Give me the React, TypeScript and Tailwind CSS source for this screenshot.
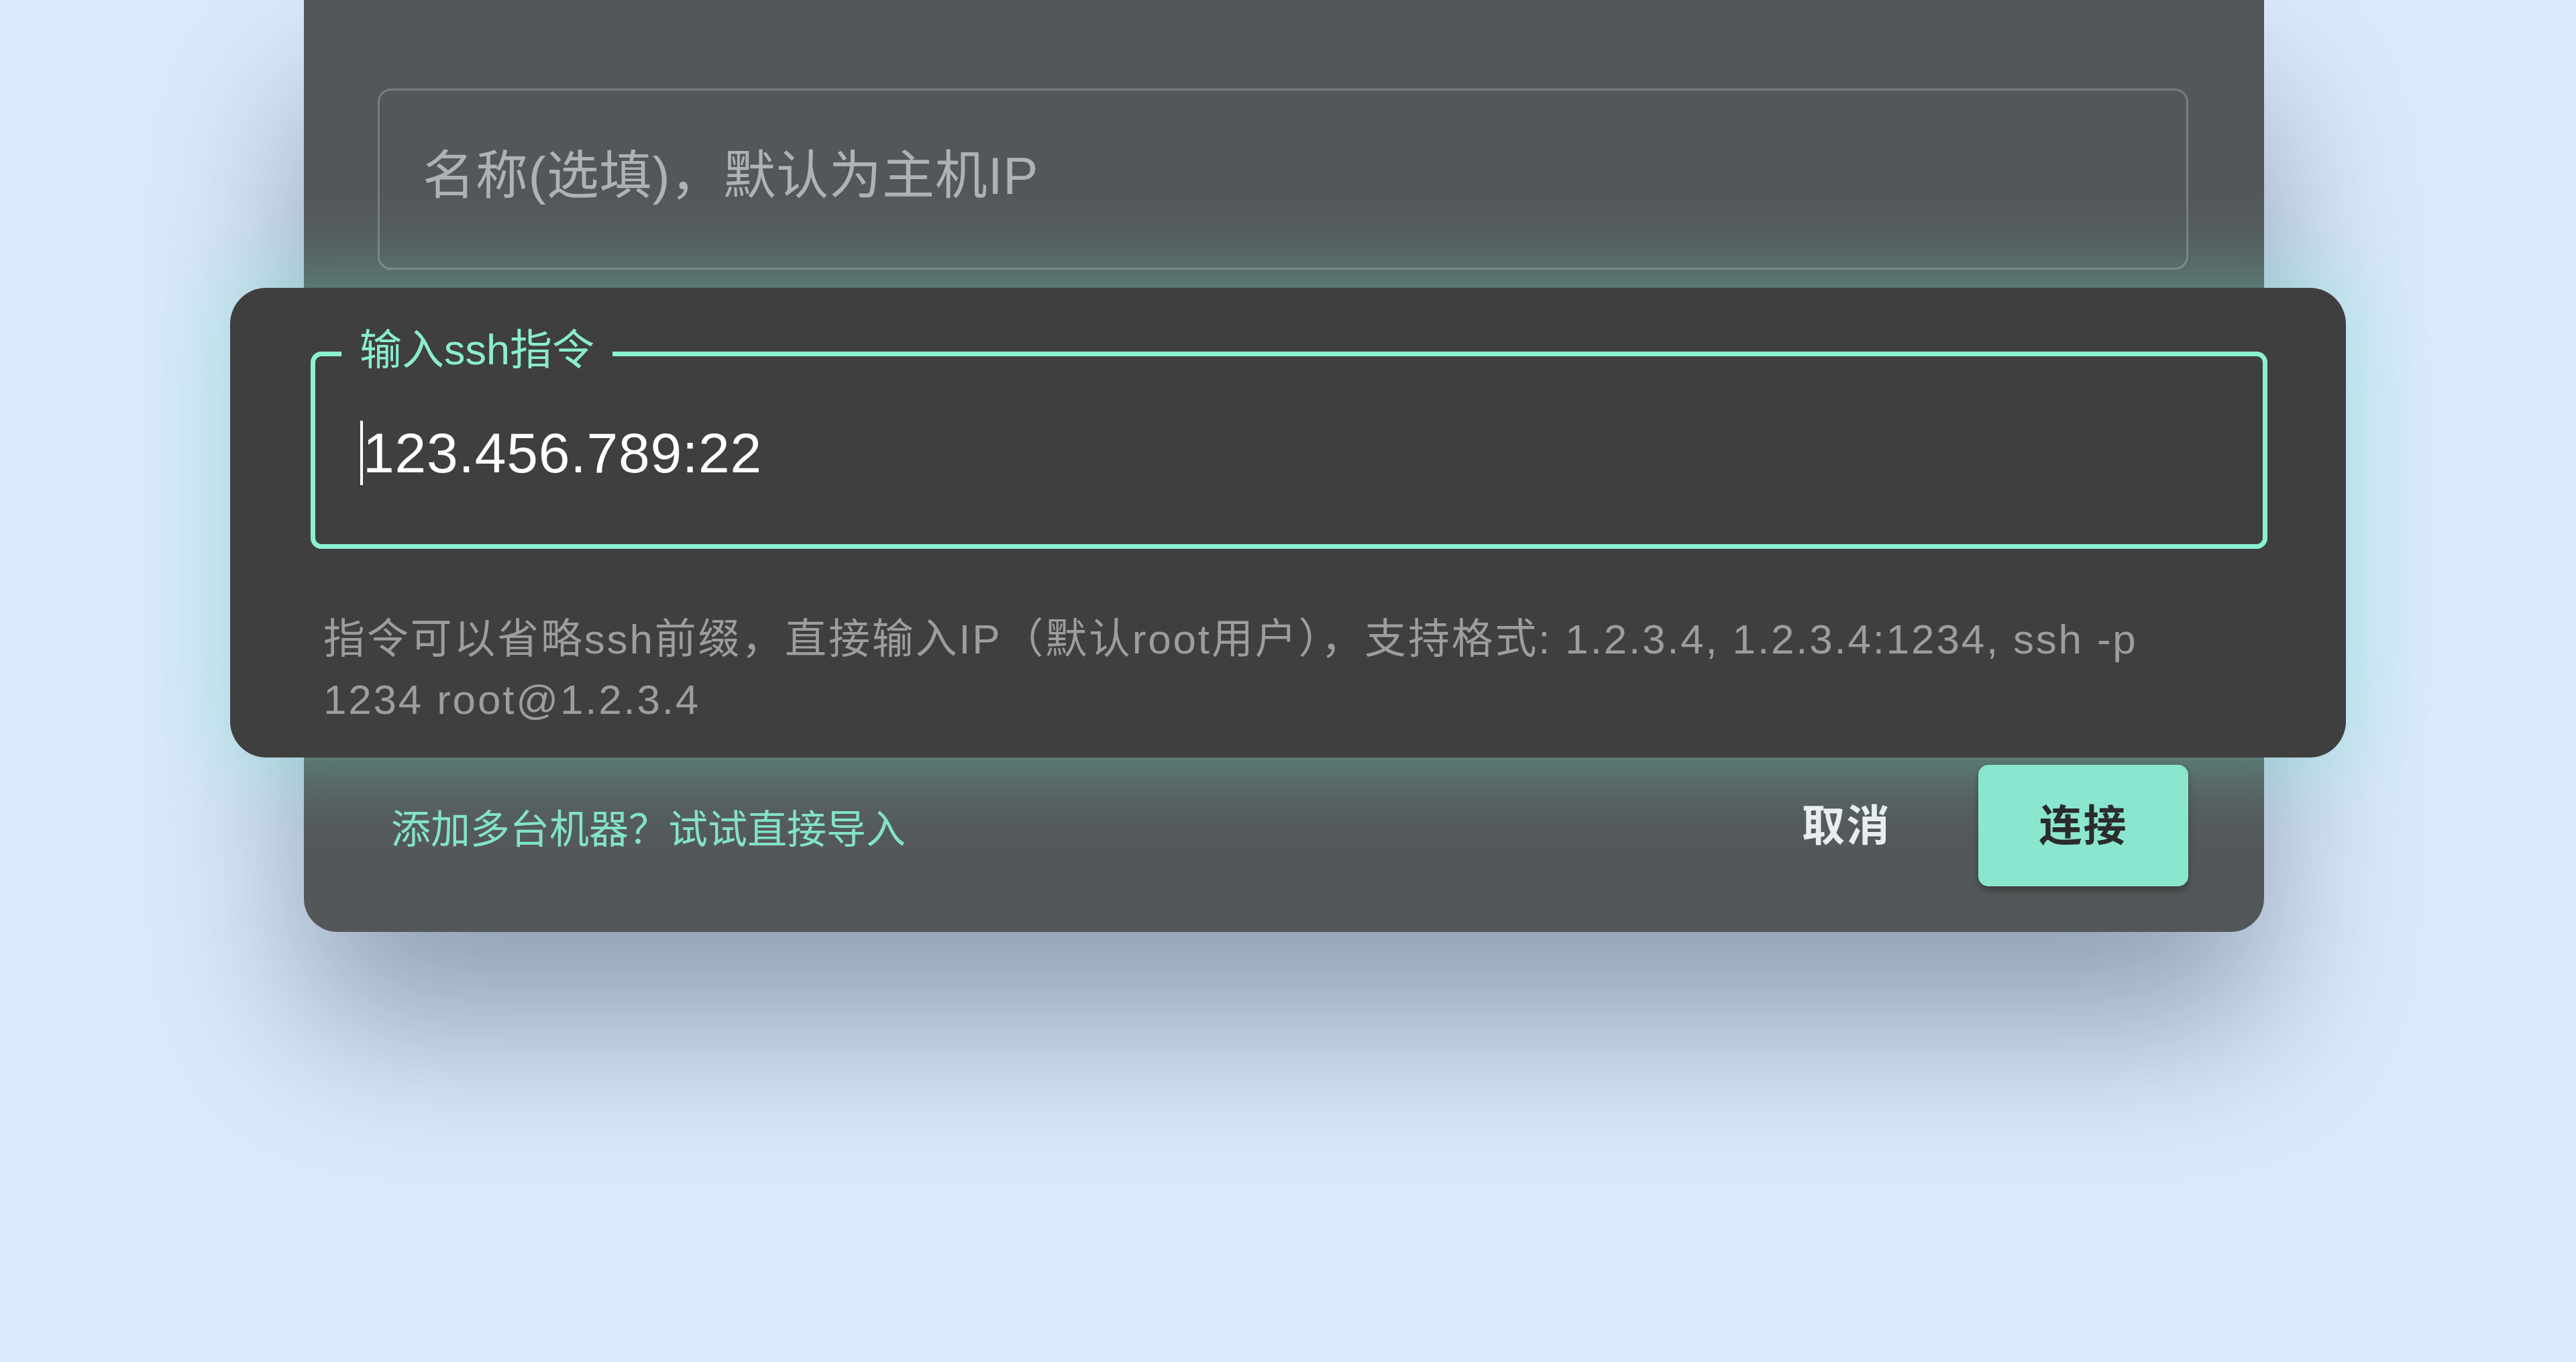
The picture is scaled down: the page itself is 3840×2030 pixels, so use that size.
const sans = "font-['Liberation_Sans','Noto_Sans_CJK_SC',sans-serif]"

function NameField() {
  return (
    <div className="flex h-[270px] items-center rounded-[20px] border-[3px] border-[#767d7f] pb-[10px] pl-[64px]">
      <span className="text-[78px] leading-none tracking-[0.9px] text-[#adb2b9]">
        名称(选填)，默认为主机IP
      </span>
    </div>
  )
}

function SshCard() {
  return (
    <div className="mt-[27px] -ml-[220px] -mr-[235px] h-[700px] rounded-[54px] bg-[#3f3f3f] pt-[95px] pr-[117px] pb-[41px] pl-[120px] shadow-[0_0_130px_10px_rgba(120,240,210,0.4)]">
      <div className="relative flex h-[294px] items-center rounded-[16px] border-[7px] border-[#8af1d2] pt-[8px] pl-[67px]">
        <span className="absolute top-[-41px] left-[39px] bg-[#3f3f3f] px-[27px] text-[63px] leading-[62px] text-[#8aedcf]">
          输入ssh指令
        </span>
        <span className="h-[96px] w-[4px] bg-white" />
        <span className="text-[84px] leading-none tracking-[0.8px] text-white">123.456.789:22</span>
      </div>
      <p className="mt-[90px] mr-[80px] ml-[19px] text-[62px] leading-[90px] tracking-[2.8px] text-[#9d9d9d]">
        指令可以省略ssh前缀，直接输入IP（默认root用户），支持格式: 1.2.3.4, 1.2.3.4:1234, ssh -p 1234 root@1.2.3.4
      </p>
    </div>
  )
}

function Actions() {
  return (
    <div className="flex items-center pt-[11px] pb-[68px] pl-[20px]">
      <span className="flex-1 pt-[14px] text-[59px] leading-none text-[#83e3c7]">添加多台机器？试试直接导入</span>
      <span className="mr-[130px] text-[64px] leading-none font-bold tracking-[2.5px] text-[#e8edf3]">取消</span>
      <button className="flex h-[181px] w-[313px] items-center justify-center rounded-[15px] bg-[#8ae6cf] text-[64px] leading-none font-bold tracking-[2px] text-[#2b2b2b] shadow-[0_6px_10px_rgba(0,0,0,0.3)]">
        连接
      </button>
    </div>
  )
}

export default function App() {
  return (
    <div className={`h-[2030px] w-full overflow-hidden bg-[#dbebfc] ${sans}`}>
      <div className="ml-[453px] w-[2922px] rounded-b-[50px] bg-[#545759] pt-[132px] pr-[113px] pl-[110px] shadow-[0_140px_240px_rgba(40,55,80,0.42)]">
        <NameField />
        <SshCard />
        <Actions />
      </div>
    </div>
  )
}
